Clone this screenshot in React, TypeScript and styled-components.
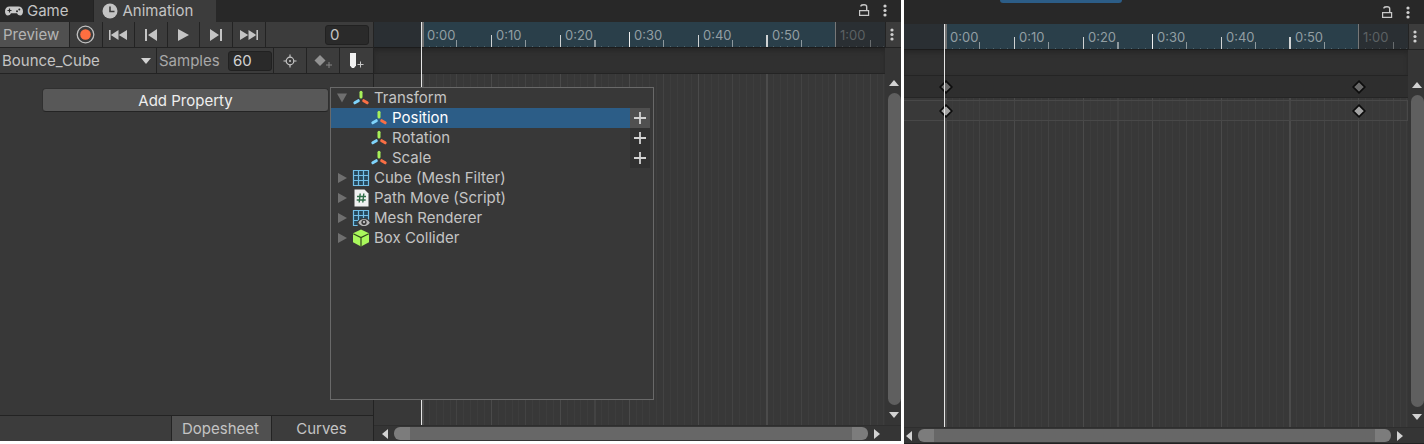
import React from "react";
import styled, { createGlobalStyle, css } from "styled-components";

const GlobalStyle = createGlobalStyle`
  * { box-sizing: border-box; }
  body {
    margin: 0;
    background: #ffffff;
    color: #c4c4c4;
    font-family: Inter, "Liberation Sans", sans-serif;
    font-size: 15px;
    line-height: 20px;
  }
  button, input, select { font: inherit; color: inherit; }
  svg { display: block; flex: none; }
`;

const FRAME_WIDTH = 6.888;
const RANGE_WIDTH = 413;
const frameX = (frame: number) => Math.round(frame * FRAME_WIDTH);

/* ---------- page and window frame ---------- */

const Page = styled.main`
  display: flex;
  gap: 3px;
  min-height: 100vh;
`;

const EditorWindow = styled.section<{ $grow: number; $end?: number }>`
  display: flex;
  flex-direction: column;
  flex: ${(p) => p.$grow} 1 0;
  min-width: 0;
  margin-bottom: ${(p) => p.$end ?? 0}px;
  background: #383838;
`;

const TabBar = styled.header<{ $height: number }>`
  position: relative;
  display: flex;
  height: ${(p) => p.$height}px;
  background: #282828;
`;

const Tab = styled.button<{ $active?: boolean }>`
  display: flex;
  align-items: center;
  gap: ${(p) => (p.$active ? 5 : 4)}px;
  height: 22px;
  padding: ${(p) => (p.$active ? "0 23px 0 8px" : "0 24px 0 5px")};
  border: 0;
  border-left: ${(p) => (p.$active ? "1px solid #232323" : "0")};
  background: ${(p) => (p.$active ? "#3c3c3c" : "#282828")};
`;

const TabTools = styled.div`
  display: flex;
  align-items: center;
  gap: 13px;
  height: 20px;
  margin: auto 0 2px auto;
  padding-right: 14px;
`;

const IconButton = styled.button`
  display: flex;
  align-items: center;
  justify-content: center;
  padding: 0;
  border: 0;
  background: transparent;
`;

const DockedTab = styled.span`
  position: absolute;
  top: 0;
  left: 96px;
  width: 122px;
  height: 3px;
  border-radius: 0 0 3px 3px;
  background: #2c5d87;
`;

const WindowBody = styled.div`
  display: flex;
  flex: 1;
  min-height: 0;
`;

/* ---------- property panel ---------- */

const Panel = styled.div`
  display: flex;
  flex-direction: column;
  flex: 0 0 374px;
  border-right: 1px solid #232323;
`;

const Toolbar = styled.div`
  display: flex;
  align-items: stretch;
  height: 26px;
  background: #3c3c3c;
  border-bottom: 1px solid #232323;
`;

const ToolButton = styled.button<{ $width?: number; $on?: boolean }>`
  display: flex;
  align-items: center;
  justify-content: ${(p) => (p.$on ? "flex-start" : "center")};
  width: ${(p) => (p.$width ? `${p.$width}px` : "auto")};
  padding: ${(p) => (p.$on ? "1px 0 0 3px" : "0")};
  border: 0;
  border-right: 1px solid #232323;
  background: ${(p) => (p.$on ? "#505050" : "transparent")};
  color: ${(p) => (p.$on ? "#b4b4b4" : "#c4c4c4")};
  &:last-child { border-right: 0; }
`;

const Transport = styled.div`
  display: grid;
  grid-template-columns: repeat(6, 1fr);
  width: 196px;
  border-right: 1px solid #232323;
`;

const field = css`
  width: 44px;
  height: 20px;
  padding: 0 4px;
  border: 1px solid #212121;
  border-radius: 3px;
  background: #2a2a2a;
  outline: none;
`;

const FrameField = styled.input`
  ${field}
  margin: 3px 4px 0 auto;
`;

const SamplesLabel = styled.label`
  display: flex;
  flex: 1;
  align-items: center;
  justify-content: space-between;
  padding: 0 1px 0 2px;
  color: #a8a8a8;
  border-right: 1px solid #232323;
`;

const SamplesField = styled.input`
  ${field}
  color: #d2d2d2;
`;

const ClipPicker = styled.div`
  display: grid;
  align-items: center;
  width: 157px;
  padding-right: 5px;
  border-right: 1px solid #232323;
  > * { grid-area: 1 / 1; }
  > svg { justify-self: end; pointer-events: none; }
`;

const ClipSelect = styled.select`
  appearance: none;
  width: 100%;
  height: 25px;
  padding: 1px 2px 0;
  border: 0;
  background: transparent;
  outline: none;
`;

const PropertyArea = styled.div`
  position: relative;
  flex: 1;
  padding: 14px 44px 0 42px;
`;

const AddProperty = styled.button`
  display: block;
  width: 100%;
  height: 24px;
  padding: 2px 0 0;
  border: 1px solid #303030;
  border-bottom-color: #242424;
  border-radius: 4px;
  background: #585858;
  color: #eeeeee;
`;

const PanelFooter = styled.footer`
  display: flex;
  justify-content: flex-end;
  height: 26px;
  border-top: 1px solid #232323;
  background: #3c3c3c;
`;

const ModeButton = styled.button<{ $on?: boolean }>`
  width: ${(p) => (p.$on ? 101 : 101)}px;
  padding: 0 2px 0 0;
  border: solid #232323;
  border-width: ${(p) => (p.$on ? "0 1px" : "0")};
  background: ${(p) => (p.$on ? "#505050" : "transparent")};
`;

/* ---------- property picker ---------- */

const Picker = styled.ul`
  position: absolute;
  z-index: 2;
  top: 13px;
  left: 330px;
  width: 324px;
  height: 313px;
  margin: 0;
  padding: 0 3px 0 0;
  border: 1px solid #696969;
  background: #383838;
  list-style: none;
`;

const PickerRow = styled.li<{ $selected?: boolean }>`
  display: flex;
  height: 20px;
  background: ${(p) => (p.$selected ? "#2c5d87" : "transparent")};
  color: ${(p) => (p.$selected ? "#ffffff" : "#c4c4c4")};
`;

const PickerLabel = styled.button<{ $child?: boolean }>`
  display: flex;
  flex: 1;
  align-items: center;
  gap: 4px;
  padding: 0 0 0 ${(p) => (p.$child ? 39 : 5)}px;
  border: 0;
  background: transparent;
  text-align: left;
`;

const AddButton = styled.button<{ $selected?: boolean }>`
  display: flex;
  align-items: center;
  justify-content: center;
  width: 20px;
  padding: 0;
  border: 0;
  background: ${(p) => (p.$selected ? "#505050" : "#313131")};
`;

/* ---------- timeline ---------- */

const TimelineBox = styled.div`
  display: flex;
  flex: 1;
  flex-direction: column;
  min-width: 0;
`;

const TimelineMain = styled.div`
  display: flex;
  flex: 1;
`;

const Tracks = styled.div`
  position: relative;
  display: flex;
  flex: 1;
  flex-direction: column;
  min-width: 0;
  overflow: hidden;
`;

const Side = styled.div`
  display: flex;
  flex-direction: column;
  flex: 0 0 16px;
  align-items: center;
  background: #353535;
`;

const SideMenu = styled(IconButton)`
  width: 16px;
  height: 26px;
  padding-right: 3px;
  background: #3c3c3c;
  border-left: 1px solid #232323;
  border-bottom: 1px solid #232323;
`;

const SideSpacer = styled.div`
  flex: 0 0 26px;
`;

const Stack = styled.div`
  display: grid;
  > * { grid-area: 1 / 1; min-width: 0; }
`;

const RulerStack = styled(Stack)`
  height: 26px;
  overflow: hidden;
  border-bottom: 1px solid #1c1c1c;
`;

const RulerBands = styled.div`
  display: flex;
  height: 25px;
  background: #2a2f33;
  font-size: 13px;
  line-height: 27px;
`;

const Lead = styled.div<{ $width: number }>`
  flex: 0 0 ${(p) => p.$width}px;
`;

const ClipBand = styled.div`
  display: grid;
  grid-template-columns: repeat(6, 69px);
  flex: 0 0 ${RANGE_WIDTH}px;
  overflow: hidden;
  background: #2a3f4a;
`;

const TimeLabel = styled.span<{ $dim?: boolean }>`
  padding-left: 5px;
  color: ${(p) => (p.$dim ? "#5c6163" : "#929ea3")};
`;

const EventRow = styled.div`
  height: 26px;
  border-bottom: 1px solid #242424;
  background: #303030;
  box-shadow: inset 0 3px 4px #272727;
`;

const SummaryRow = styled.div`
  position: relative;
  height: 22px;
  border-bottom: 1px solid #252525;
  background: #2e2e2e;
`;

const SheetStack = styled(Stack)`
  flex: 1;
`;

const CurveRow = styled.div`
  position: relative;
  height: 21px;
  margin-top: 2px;
  border: 1px solid #484848;
  border-left: 0;
  background: rgba(60, 60, 60, 0.4);
`;

const Marker = styled.svg<{ $x: number }>`
  position: absolute;
  z-index: 1;
  top: calc(50% - 7px);
  left: ${(p) => p.$x}px;
`;

const Playhead = styled.div<{ $x: number }>`
  position: absolute;
  z-index: 1;
  top: 0;
  bottom: 0;
  left: ${(p) => p.$x}px;
  width: 1px;
  background: #e6e6e6;
`;

const ScrollTrack = styled.div`
  display: flex;
  flex: 1;
  flex-direction: column;
  align-items: center;
  gap: 5px;
  padding: 4px 0 5px 2px;
`;

const ScrollThumb = styled.div`
  flex: 1;
  width: 13px;
  border-radius: 7px;
  background: #5f5f5f;
`;

const RangeBar = styled.div<{ $left: number; $bottom: number }>`
  display: flex;
  align-items: center;
  gap: 4px;
  height: ${(p) => 16 + p.$bottom}px;
  padding: 0 19px 0 ${(p) => p.$left}px;
  border-top: 1px solid #2e2e2e;
  border-bottom: ${(p) => p.$bottom}px solid #222222;
  background: #353535;
`;

const RangeThumb = styled.div`
  flex: 1;
  height: 13px;
  border: solid #7c7c7c;
  border-width: 0 16px;
  border-radius: 6px;
  background: #676767;
`;

/* ---------- icons ---------- */

const GamepadIcon = () => (
  <svg width="18" height="12" viewBox="0 0 18 12">
    <path d="M4.500 1.500h9C16 1.500 18 3.500 18 6.200c0 2.600-1 4.300-2.800 4.300-1.500 0-2.400-1-3.200-2.300H6C5.200 9.500 4.300 10.500 2.800 10.500 1 10.500 0 8.800 0 6.200 0 3.500 2 1.500 4.500 1.500z" fill="#c8c8c8" />
    <path d="M4.500 3.500v4M2.500 5.500h4" stroke="#282828" strokeWidth="1.200" />
    <circle cx="12" cy="6.300" r="1" fill="#282828" />
    <circle cx="14.300" cy="4.500" r="1" fill="#282828" />
  </svg>
);

const ClockIcon = () => (
  <svg width="16" height="16" viewBox="0 0 16 16">
    <circle cx="8" cy="8" r="7.500" fill="#c4c4c4" />
    <path d="M8 3.500V8.500H12.500" fill="none" stroke="#3c3c3c" strokeWidth="1.600" />
  </svg>
);

const LockIcon = () => (
  <svg width="12" height="13" viewBox="0 0 12 13">
    <path d="M1.600 6.600h9v4.800h-9z" fill="none" stroke="#c8c8c8" strokeWidth="1.200" />
    <path d="M3 2.500V1.600C3.300.9 4 .8 6 .8c2 0 2.700.7 2.700 2V6.500" fill="none" stroke="#c8c8c8" strokeWidth="1.400" />
  </svg>
);

const DotsIcon = () => (
  <svg width="4" height="13" viewBox="0 0 4 13" fill="#cfcfcf">
    <circle cx="2" cy="2" r="1.600" />
    <circle cx="2" cy="6.500" r="1.600" />
    <circle cx="2" cy="11" r="1.600" />
  </svg>
);

const RecordIcon = () => (
  <svg width="19" height="19" viewBox="0 0 19 19">
    <circle cx="9.500" cy="9.500" r="8.300" fill="none" stroke="#c0c0c0" strokeWidth="1.300" />
    <circle cx="9.500" cy="9.500" r="5.300" fill="#ff6e40" />
  </svg>
);

const transportPaths = {
  first: "M0 1h1.600v10H0zM9.500 1v10L1.800 6zM18 1v10L9.800 6z",
  previous: "M3 0h2v12H3zM15 0v12L6 6z",
  play: "M4 0l11 6-11 6z",
  next: "M3 0l9 6-9 6zM13 0h2v12h-2z",
  last: "M0 1l8.200 5L0 11zM8.500 1l7.700 5-7.700 5zM16.400 1H18v10h-1.600z",
};

const TransportIcon = ({ name }: { name: keyof typeof transportPaths }) => (
  <svg width="18" height="12" viewBox="0 0 18 12">
    <path d={transportPaths[name]} fill="#c4c4c4" />
  </svg>
);

const TargetIcon = () => (
  <svg width="14" height="14" viewBox="0 0 14 14">
    <circle cx="7" cy="7" r="3.800" fill="none" stroke="#c4c4c4" strokeWidth="1.200" />
    <circle cx="7" cy="7" r="1" fill="#c4c4c4" />
    <path d="M7 .5v3M7 10.500v3M.5 7h3M10.500 7h3" stroke="#c4c4c4" strokeWidth="1.200" />
  </svg>
);

const AddKeyIcon = () => (
  <svg width="18" height="14" viewBox="0 0 18 14">
    <path d="M6 1l5.500 5.500L6 12 .5 6.500z" fill="#929292" />
    <path d="M15 8v6M12 11h6" stroke="#858585" />
  </svg>
);

const AddEventIcon = () => (
  <svg width="14" height="17" viewBox="0 0 14 17">
    <path d="M0 1h6v12.500l-2 2.500H2l-2-2.500z" fill="#f2f2f2" />
    <path d="M10.500 9.500v6M7.500 12.500h6" stroke="#c8c8c8" />
  </svg>
);

type Direction = "up" | "down" | "left" | "right";
const arrowPaths: Record<Direction, string> = {
  up: "M0 8l5-6 5 6z",
  down: "M0 2h10l-5 6z",
  left: "M8 0v10L2 5z",
  right: "M2 0v10l6-5z",
};

const Arrow = ({ to }: { to: Direction }) => (
  <svg width="10" height="10" viewBox="0 0 10 10">
    <path d={arrowPaths[to]} fill="#d2d2d2" />
  </svg>
);

const Foldout = ({ open }: { open?: boolean }) => (
  <svg width="12" height="12" viewBox="0 0 12 12">
    <path d={open ? "M1 1.500h10L6 10.500z" : "M2 1l9 5-9 5z"} fill="#6f6f6f" />
  </svg>
);

const AxesIcon = () => (
  <svg width="18" height="16" viewBox="0 0 18 16" strokeLinecap="round" strokeWidth="3">
    <path d="M9 2.300V7" stroke="#a8f05a" />
    <path d="M6.300 10.700L2.800 12.800" stroke="#7fd3fb" />
    <path d="M11.700 10.700l3.500 2.100" stroke="#f96f45" />
  </svg>
);

const MeshIcon = ({ eye }: { eye?: boolean }) => (
  <svg width="18" height="18" viewBox="0 0 18 18">
    <path d="M1 1h16v15H1z" fill="#26475a" />
    <path d="M1.500 1.500h15v15h-15zM6.500 1.500v15M11.500 1.500v15M1.500 6.500h15M1.500 11.500h15" fill="none" stroke="#72bfe8" strokeWidth="1.200" />
    {eye && (
      <g>
        <path d="M5 13.500C7.500 8 15 7.500 18 12v6H6z" fill="#383838" />
        <path d="M6.300 13.700c2.500-5 8.800-5 11.500 0-2.700 4.500-9 4.500-11.500 0z" fill="#b9b9b9" />
        <circle cx="12" cy="13.300" r="2.600" fill="#383838" />
        <circle cx="12" cy="13" r="1.200" fill="#b9b9b9" />
      </g>
    )}
  </svg>
);

const ScriptIcon = () => (
  <svg width="18" height="18" viewBox="0 0 18 18">
    <path d="M2.500.5h10l4 4v13h-14z" fill="#f0f0f0" />
    <path d="M8.200 4.500l-1 9M11.800 4.500l-1 9M5 7.500h9M4.700 11h9" stroke="#2f6e48" strokeWidth="1.400" />
  </svg>
);

const BoxIcon = () => (
  <svg width="18" height="18" viewBox="0 0 18 18">
    <path d="M9 .5l8 3.800v9l-8 4.200-8-4.200v-9z" fill="#a9f75c" />
    <path d="M1.200 4.700L9 8.500l7.800-3.800M9 8.500v9" fill="none" stroke="#30461d" strokeWidth="1.200" />
  </svg>
);

const PlusIcon = () => (
  <svg width="12" height="12" viewBox="0 0 12 12">
    <path d="M6 0v12M0 6h12" stroke="#d2d2d2" strokeWidth="1.800" />
  </svg>
);

/* ---------- timeline pieces ---------- */

const frames = Array.from({ length: 69 }, (_, i) => i);

const tickShape = (frame: number) => {
  const width = frame === 50 || frame === 25 ? 2 : 1;
  if (frame === 0) return { width: 2, height: 25, fill: "#707070" };
  if (frame === 60) return { width, height: 25, fill: "#777777" };
  if (frame === 30) return { width, height: 15, fill: "#f0f0f0" };
  if (frame % 10 === 0) return { width, height: 12, fill: "#cfd2d3" };
  if (frame > 60) return { width, height: frame % 5 ? 1 : 7, fill: frame % 5 ? "#454a4d" : "#686c6e" };
  if (frame % 5 === 0) return { width, height: 7, fill: "#8d989d" };
  return { width, height: 1, fill: "#526770" };
};

const RulerTicks = ({ lead }: { lead: number }) => (
  <svg width="100%" height="25" aria-hidden="true" shapeRendering="crispEdges">
    {frames.map((f) => {
      const t = tickShape(f);
      return <rect key={f} x={lead + frameX(f)} y={25 - t.height} width={t.width} height={t.height} fill={t.fill} />;
    })}
  </svg>
);

const gridColor = (frame: number) => {
  if (frame === 50 || frame === 0) return "#4b4b4b";
  if (frame % 10 === 0) return "#4a4a4a";
  if (frame % 5 === 0) return "#434343";
  return "#3d3d3d";
};

const GridLines = ({ lead }: { lead: number }) => (
  <svg width="100%" height="100%" aria-hidden="true" shapeRendering="crispEdges">
    {frames.map((f) => (
      <rect key={f} x={lead + frameX(f)} y="0" width={f === 0 || f === 25 || f === 50 ? 2 : 1} height="100%" fill={gridColor(f)} />
    ))}
  </svg>
);

const Key = ({ x, fill, label }: { x: number; fill: string; label: string }) => (
  <Marker $x={x - 6} width="14" height="14" viewBox="0 0 14 14" role="img" aria-label={label}>
    <path d="M7 1.200L12.800 7 7 12.800 1.200 7z" fill={fill} stroke="#0c0c0c" strokeWidth="1.700" />
  </Marker>
);

const Timeline = ({ lead, left, bottom = 0, keyed }: { lead: number; left: number; bottom?: number; keyed?: boolean }) => (
  <TimelineBox>
    <TimelineMain>
      <Tracks>
        <RulerStack>
          <RulerBands>
            <Lead $width={lead} />
            <ClipBand>
              {["0:00", "0:10", "0:20", "0:30", "0:40", "0:50"].map((t) => (
                <TimeLabel key={t}>{t}</TimeLabel>
              ))}
            </ClipBand>
            <TimeLabel $dim>1:00</TimeLabel>
          </RulerBands>
          <RulerTicks lead={lead} />
        </RulerStack>
        <EventRow />
        {keyed && (
          <SummaryRow>
            <Key x={lead} fill="#6a6a6a" label="Summary key at 0:00" />
            <Key x={lead + RANGE_WIDTH} fill="#6a6a6a" label="Summary key at 1:00" />
          </SummaryRow>
        )}
        <SheetStack>
          <GridLines lead={lead} />
          {keyed && (
            <CurveRow>
              <Key x={lead} fill="#a4a4a4" label="Position key at 0:00" />
              <Key x={lead + RANGE_WIDTH} fill="#a4a4a4" label="Position key at 1:00" />
            </CurveRow>
          )}
        </SheetStack>
        <Playhead $x={lead - 1} />
      </Tracks>
      <Side>
        <SideMenu aria-label="Timeline options"><DotsIcon /></SideMenu>
        <SideSpacer />
        <ScrollTrack>
          <Arrow to="up" />
          <ScrollThumb />
          <Arrow to="down" />
        </ScrollTrack>
      </Side>
    </TimelineMain>
    <RangeBar $left={left} $bottom={bottom}>
      <Arrow to="left" />
      <RangeThumb />
      <Arrow to="right" />
    </RangeBar>
  </TimelineBox>
);

const WindowTools = () => (
  <TabTools>
    <IconButton aria-label="Lock"><LockIcon /></IconButton>
    <IconButton aria-label="Window menu"><DotsIcon /></IconButton>
  </TabTools>
);

const transform = ["Position", "Rotation", "Scale"];
const components = [
  { name: "Cube (Mesh Filter)", icon: <MeshIcon /> },
  { name: "Path Move (Script)", icon: <ScriptIcon /> },
  { name: "Mesh Renderer", icon: <MeshIcon eye /> },
  { name: "Box Collider", icon: <BoxIcon /> },
];

const PropertyPicker = () => (
  <Picker>
    <PickerRow>
      <PickerLabel><Foldout open /><AxesIcon />Transform</PickerLabel>
    </PickerRow>
    {transform.map((name, i) => (
      <PickerRow key={name} $selected={i === 0}>
        <PickerLabel $child><AxesIcon />{name}</PickerLabel>
        <AddButton $selected={i === 0} aria-label={`Add ${name}`}><PlusIcon /></AddButton>
      </PickerRow>
    ))}
    {components.map((c) => (
      <PickerRow key={c.name}>
        <PickerLabel><Foldout />{c.icon}{c.name}</PickerLabel>
      </PickerRow>
    ))}
  </Picker>
);

export default function App() {
  return (
    <>
      <GlobalStyle />
      <Page>
        <EditorWindow $grow={901} $end={3}>
          <TabBar $height={22}>
            <Tab><GamepadIcon />Game</Tab>
            <Tab $active><ClockIcon />Animation</Tab>
            <WindowTools />
          </TabBar>
          <WindowBody>
            <Panel>
              <Toolbar>
                <ToolButton $on $width={70}>Preview</ToolButton>
                <Transport>
                  <ToolButton aria-label="Record"><RecordIcon /></ToolButton>
                  <ToolButton aria-label="First frame"><TransportIcon name="first" /></ToolButton>
                  <ToolButton aria-label="Previous key"><TransportIcon name="previous" /></ToolButton>
                  <ToolButton aria-label="Play"><TransportIcon name="play" /></ToolButton>
                  <ToolButton aria-label="Next key"><TransportIcon name="next" /></ToolButton>
                  <ToolButton aria-label="Last frame"><TransportIcon name="last" /></ToolButton>
                </Transport>
                <FrameField aria-label="Current frame" defaultValue="0" />
              </Toolbar>
              <Toolbar>
                <ClipPicker>
                  <ClipSelect aria-label="Clip" defaultValue="Bounce_Cube">
                    <option>Bounce_Cube</option>
                  </ClipSelect>
                  <Arrow to="down" />
                </ClipPicker>
                <SamplesLabel>
                  Samples
                  <SamplesField defaultValue="60" />
                </SamplesLabel>
                <ToolButton $width={33} aria-label="Filter by selection"><TargetIcon /></ToolButton>
                <ToolButton $width={33} aria-label="Add keyframe"><AddKeyIcon /></ToolButton>
                <ToolButton $width={33} aria-label="Add event"><AddEventIcon /></ToolButton>
              </Toolbar>
              <PropertyArea>
                <AddProperty>Add Property</AddProperty>
                <PropertyPicker />
              </PropertyArea>
              <PanelFooter>
                <ModeButton $on>Dopesheet</ModeButton>
                <ModeButton>Curves</ModeButton>
              </PanelFooter>
            </Panel>
            <Timeline lead={48} left={6} />
          </WindowBody>
        </EditorWindow>
        <EditorWindow $grow={520}>
          <TabBar $height={24}>
            <DockedTab />
            <WindowTools />
          </TabBar>
          <WindowBody>
            <Timeline lead={41} left={0} bottom={1} keyed />
          </WindowBody>
        </EditorWindow>
      </Page>
    </>
  );
}
